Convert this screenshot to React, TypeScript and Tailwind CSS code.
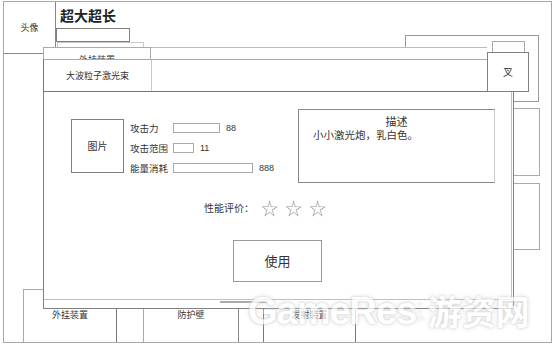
function BackgroundPage() {
  return (
    <div className="ml-[3px] mt-[1px] flex h-[342px] w-[549px] flex-col border border-[#a8a8a8]">
      <div className="flex h-[287px]">
        {/* avatar */}
        <div className="flex h-[52px] w-[52px] items-center justify-center border-r border-b border-[#888] text-[9px] leading-[12px]">
          头像
        </div>

        {/* name + fields */}
        <div className="flex flex-1 flex-col">
          <div className="pl-[4px] pt-[3px] text-[14px] font-bold leading-[20px] text-[#222]">超大超长</div>
          <div className="mt-[3px] h-[14px] w-[74px] border border-[#808080]" />
          <div className="ml-[1px] h-[10px] w-[87px] border border-b-0 border-[#c8c8c8]" />
        </div>

        {/* right side panels */}
        <div className="mr-[11px] flex w-[135px] flex-col">
          <div className="mt-[33px] h-[67px] w-[134px] border border-[#999]" />
          <div className="mt-[6px] h-[68px] w-[28px] self-end border border-[#aaa]" />
          <div className="mt-[7px] h-[67px] w-[28px] self-end border border-[#aaa]" />
        </div>
      </div>

      {/* bottom tabs */}
      <div className="flex h-[53px] pl-[19px] text-[9px] leading-[12px]">
        <div className="w-[94px] border-l border-t border-r border-[#aaa] border-r-[#777] pt-[19px] text-center">外挂装置</div>
        <div className="ml-[26px] w-[96px] border-l border-t border-r border-[#aaa] border-r-[#888] pt-[19px] text-center">防护壁</div>
        <div className="ml-[24px] w-[93px] border-l border-t border-r border-[#777] pt-[19px] text-center">发射装置</div>
      </div>
    </div>
  )
}

function StatRow({ label, boxWidth, value, tall }: { label: string; boxWidth: string; value: string; tall?: boolean }) {
  return (
    <div className={`flex items-center ${tall ? "h-[21px]" : "h-[20px]"}`}>
      <span className="w-[43px] text-[9.5px] leading-[12px]">{label}</span>
      <span className={`h-[10px] border border-[#aaa] ${boxWidth}`} />
      <span className="ml-[6px] font-['Liberation_Sans',sans-serif] text-[9px] leading-[12px]">{value}</span>
    </div>
  )
}

function ItemDialog() {
  return (
    <div className="absolute left-[43px] top-[41px] flex w-[486px] flex-col">
      {/* header */}
      <div className="flex h-[51px]">
        <div className="flex w-[444px] flex-col">
          <div className="h-[6px]" />
          <div className="flex h-[12px]">
            <div className="h-[12px] w-[108px] overflow-hidden border-l border-t border-r border-[#aaa] bg-white pt-[6px] text-center text-[9px] leading-[12px]">
              外挂装置
            </div>
            <div className="flex-1 border-t border-[#bbb] bg-white" />
          </div>
          <div className="flex h-[33px] border-t border-b border-l border-[#777] border-t-[#aaa] bg-white">
            <div className="flex w-[108px] items-center justify-center border-r border-[#c8c8c8] text-[9px] leading-[12px]">
              大波粒子激光束
            </div>
          </div>
        </div>
        <div className="flex w-[42px] flex-col">
          <div className="ml-[5px] h-[11px] w-[33px] border-l border-t border-r border-[#aaa] bg-white" />
          <div className="flex h-[40px] items-center justify-center border border-[#808080] bg-white text-[10px] leading-[12px]">
            叉
          </div>
        </div>
      </div>

      {/* body */}
      <div className="flex h-[217px] w-[471px] flex-col border-l border-r border-b border-[#808080] bg-white">
        <div className="flex h-[208px] w-[468px] flex-col border-r border-b border-[#c0c0c0]">
          <div className="flex items-start pt-[17px]">
            <div className="ml-[27px] mt-[10px] flex h-[54px] w-[53px] items-center justify-center border border-[#808080] text-[10px] leading-[12px]">
              图片
            </div>
            <div className="ml-[6px] mt-[8px] flex flex-col">
              <StatRow label="攻击力" boxWidth="w-[47px]" value="88" tall />
              <StatRow label="攻击范围" boxWidth="w-[21px]" value="11" />
              <StatRow label="能量消耗" boxWidth="w-[80px]" value="888" />
            </div>
            <div className="ml-auto mr-[16px] h-[74px] w-[197px] border border-[#888] border-r-[#ccc]">
              <div className="pt-[4px] text-center text-[11px] leading-[14px]">描述</div>
              <div className="pl-[14px] text-[10.5px] leading-[14px]">小小激光炮，乳白色。</div>
            </div>
          </div>

          <div className="ml-[160px] mt-[15px] flex h-[20px] items-center">
            <span className="text-[10px] leading-[12px]">性能评价：</span>
            <div className="ml-[7px] flex gap-[7px] text-[17px] leading-[20px] text-[#999]">
              <span>☆</span>
              <span>☆</span>
              <span>☆</span>
            </div>
          </div>

          <div className="ml-[189px] mt-[22px] flex h-[42px] w-[89px] items-center justify-center border border-[#999] text-[13px] leading-[16px]">
            使用
          </div>
        </div>
        <div className="ml-[176px] mt-px h-[2px] w-[47px] bg-[#aaa]" />
      </div>
    </div>
  )
}

function Watermark() {
  return (
    <div className="pointer-events-none absolute left-[248px] top-[292px] flex items-center text-white opacity-75 [text-shadow:0_0_2px_#bbb,0_0_5px_#d0d0d0]">
      <span className="font-['Liberation_Sans',sans-serif] text-[38px] font-bold leading-[38px] tracking-[-1px]">GameRes</span>
      <span className="ml-[2px] flex flex-col font-['Liberation_Sans',sans-serif] text-[6px] font-bold leading-[7px]">
        <span>c</span>
        <span>o</span>
        <span>m</span>
      </span>
      <span className="ml-[4px] text-[34px] font-bold leading-[38px]">游资网</span>
    </div>
  )
}

export default function App() {
  return (
    <div className="relative h-[347px] w-[554px] overflow-hidden bg-white font-['Noto_Sans_CJK_SC',sans-serif] text-[#333]">
      <BackgroundPage />
      <ItemDialog />
      <Watermark />
    </div>
  )
}
